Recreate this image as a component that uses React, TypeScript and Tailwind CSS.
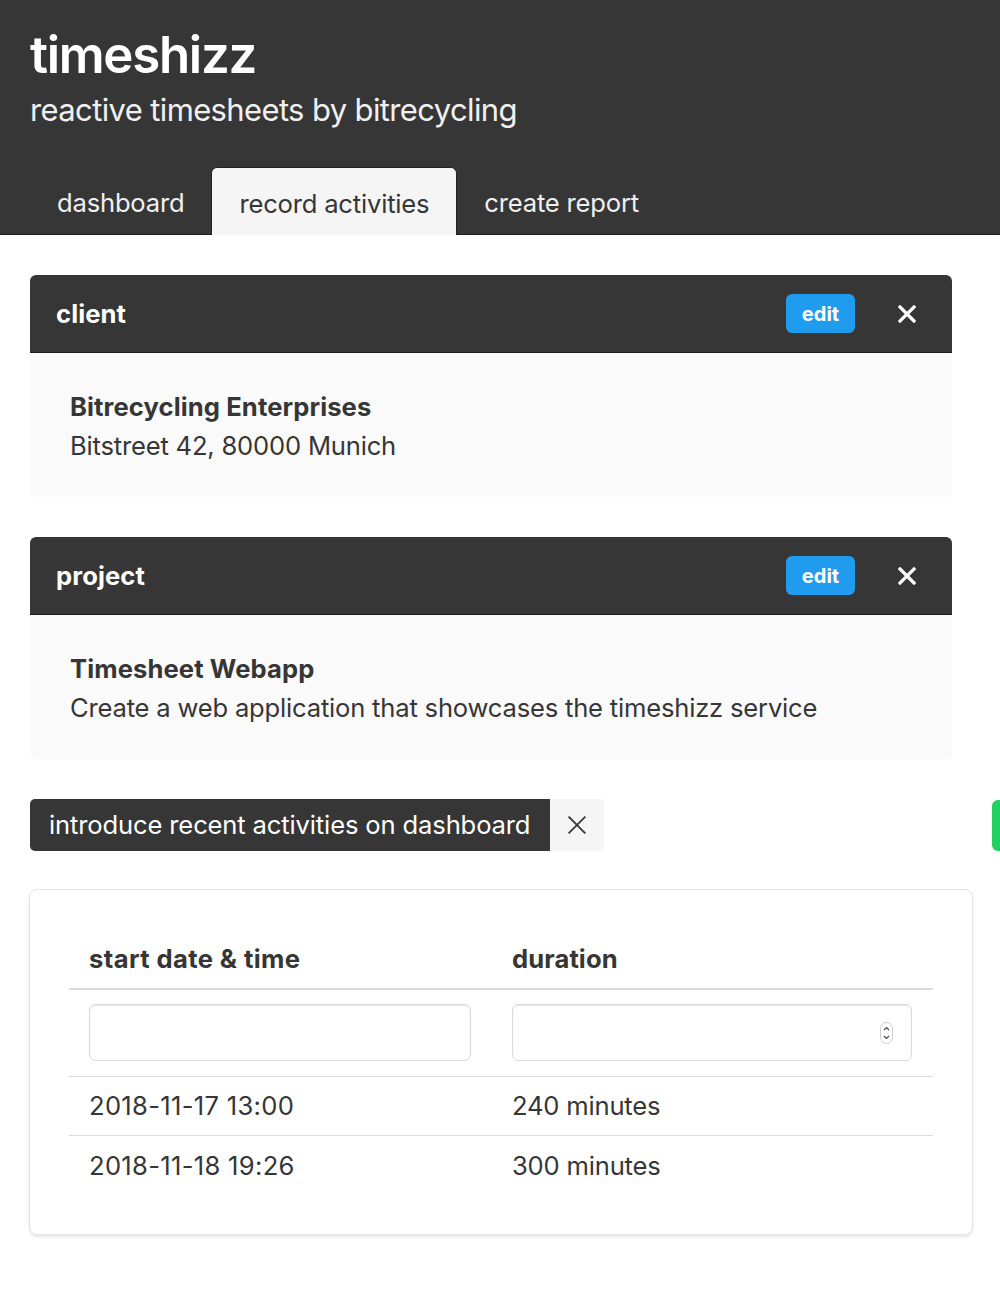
import React from 'react';

const FONT = { fontFamily: 'Inter, "Noto Sans", sans-serif' };

const TABS = [
  { label: 'dashboard', active: false },
  { label: 'record activities', active: true },
  { label: 'create report', active: false },
];

const ROWS = [
  { start: '2018-11-17 13:00', duration: '240 minutes' },
  { start: '2018-11-18 19:26', duration: '300 minutes' },
];

function Cross({ size = 18, stroke = 3.2 }: { size?: number; stroke?: number }) {
  return (
    <svg width={size} height={size} viewBox="0 0 18 18" fill="none">
      <path d="M2 2L16 16M16 2L2 16" stroke="currentColor" strokeWidth={stroke} strokeLinecap="square" />
    </svg>
  );
}

function InfoCard({ title, name, text }: { title: string; name: string; text: string }) {
  return (
    <div className="w-[922px]">
      <div className="h-[78px] bg-[#363636] rounded-t-[6px] flex items-center pl-[26px] pr-[36px] border-b border-[#1e1e1e]">
        <span className="text-white font-bold text-[25.6px] tracking-[0.1px] pt-[2px]">{title}</span>
        <div className="ml-auto flex items-center gap-[43px]">
          <button className="w-[69px] h-[39px] rounded-[6px] bg-[#209cee] text-white font-bold text-[20px] flex items-center justify-center">
            edit
          </button>
          <span className="text-white">
            <Cross />
          </span>
        </div>
      </div>
      <div className="bg-[#fafafa] rounded-b-[6px] pl-[40px] pt-[34px] pb-[32px] text-[25.6px] leading-[39px] text-[#363636] tracking-[-0.2px]">
        <div className="font-bold tracking-[0.1px]">{name}</div>
        <div>{text}</div>
      </div>
    </div>
  );
}

export default function App() {
  return (
    <div className="min-h-[1295px] bg-white overflow-hidden" style={FONT}>
      <header className="bg-[#363636] h-[235px] border-b border-[#1a1a1a] flex flex-col">
        <div className="pl-[30px] pt-[26px]">
          <h1 className="text-white font-semibold text-[51px] leading-[58px] tracking-[-1.3px]">timeshizz</h1>
          <p className="text-[#f0f0f0] text-[31px] leading-[40px] mt-[6px] tracking-[-0.63px]">
            reactive timesheets by bitrecycling
          </p>
        </div>
        <nav className="flex pl-[30px] mt-auto">
          {TABS.map((t) => (
            <div
              key={t.label}
              className={`h-[67px] px-[27px] pt-[5px] flex items-center text-[25.6px] tracking-[-0.2px] ${
                t.active
                  ? 'bg-[#f5f5f5] text-[#363636] rounded-t-[6px] border border-b-0 border-[#222] -mb-px h-[68px]'
                  : 'text-[#f0f0f0]'
              }`}
            >
              {t.label}
            </div>
          ))}
        </nav>
      </header>

      <main className="pl-[30px] pt-[40px]">
        <InfoCard title="client" name="Bitrecycling Enterprises" text="Bitstreet 42, 80000 Munich" />
        <div className="h-[40px]" />
        <InfoCard
          title="project"
          name="Timesheet Webapp"
          text="Create a web application that showcases the timeshizz service"
        />

        <div className="mt-[40px] flex items-center h-[52px]">
          <div className="h-[52px] flex items-center bg-[#363636] text-white text-[25.6px] pl-[19px] pr-[20px] rounded-l-[5px] tracking-[-0.15px]">
            introduce recent activities on dashboard
          </div>
          <div className="h-[52px] w-[54px] bg-[#f5f5f5] rounded-r-[5px] flex items-center justify-center text-[#363636]">
            <Cross size={20} stroke={1.6} />
          </div>
          <div className="ml-auto h-[51px] w-[8px] bg-[#23d160] rounded-l-[6px]" />
        </div>

        <div className="mt-[38px] w-[944px] -ml-px rounded-[8px] border border-[#e3e3e3] shadow-[0_2px_3px_rgba(10,10,10,0.1)] px-[39px] py-[40px] text-[#363636]">
          <table className="w-[864px] text-[25.6px] border-collapse">
            <thead>
              <tr className="border-b-2 border-[#dbdbdb]">
                <th className="w-[424px] h-[59px] text-left font-bold pl-[20px] align-middle tracking-[0.4px]">start date &amp; time</th>
                <th className="h-[59px] text-left font-bold pl-[19px] align-middle tracking-[0.1px]">duration</th>
              </tr>
            </thead>
            <tbody>
              <tr className="border-b border-[#dbdbdb]">
                <td className="h-[87px] pl-[20px] pr-[22px]">
                  <div className="h-[57px] w-[382px] rounded-[6px] border border-[#dbdbdb] bg-white shadow-[inset_0_1px_2px_rgba(10,10,10,0.1)]" />
                </td>
                <td className="h-[87px] pl-[19px]">
                  <div className="relative h-[57px] w-[400px] rounded-[6px] border border-[#dbdbdb] bg-white shadow-[inset_0_1px_2px_rgba(10,10,10,0.1)]">
                    <div className="absolute right-[18px] top-[17px] w-[13px] h-[22px] rounded-full border border-[#cfcfcf] flex flex-col items-center justify-center">
                      <svg width="7" height="16" viewBox="0 0 7 16" fill="none">
                        <path d="M1 5L3.5 2.5L6 5M1 11L3.5 13.5L6 11" stroke="#444" strokeWidth="1.1" />
                      </svg>
                    </div>
                  </div>
                </td>
              </tr>
              {ROWS.map((r, i) => (
                <tr key={r.start} className={i < ROWS.length - 1 ? 'border-b border-[#dbdbdb]' : ''}>
                  <td className="h-[59px] pl-[20px] pt-[2px] tracking-[0.3px]">{r.start}</td>
                  <td className="h-[59px] pl-[19px] pt-[2px] tracking-[-0.2px]">{r.duration}</td>
                </tr>
              ))}
            </tbody>
          </table>
        </div>
      </main>
    </div>
  );
}
